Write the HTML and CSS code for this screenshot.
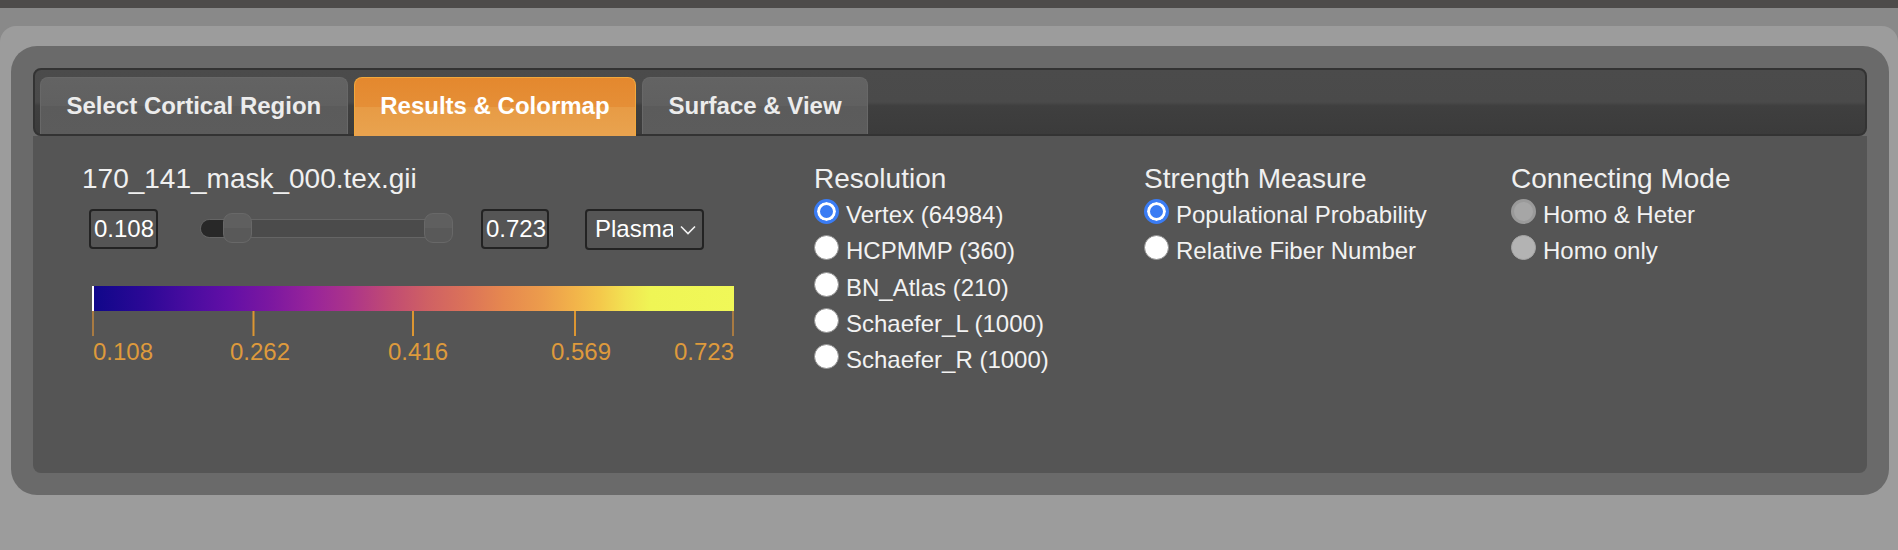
FILE: index.html
```html
<!DOCTYPE html>
<html lang="en">
<head>
<meta charset="utf-8">
<title>Results &amp; Colormap</title>
<link rel="stylesheet" href="styles.css">
</head>
<body>
<div class="topbar"></div>
<div class="frame">
  <div class="stage">
    <div class="panel">
      <div class="tabs">
        <ul class="tabbar">
          <li class="tab">Select Cortical Region</li>
          <li class="tab active">Results &amp; Colormap</li>
          <li class="tab">Surface &amp; View</li>
        </ul>
        <div class="content">
          <div class="cmap">
            <div class="fname">170_141_mask_000.tex.gii</div>
            <div class="controls">
              <div class="num num-min">0.108</div>
              <div class="slider">
                <div class="track"><div class="below"></div></div>
                <span class="handle h-min"></span>
                <span class="handle h-max"></span>
              </div>
              <div class="num num-max">0.723</div>
              <div class="select">
                <span class="sel-text">Plasma</span>
                <svg class="chev" width="16" height="10" viewBox="0 0 16 10"><path d="M1 1.5 L8 8.5 L15 1.5" fill="none" stroke="#f2f2f2" stroke-width="1.6"/></svg>
              </div>
            </div>
            <div class="bar"></div>
            <svg class="axis" width="650" height="60" viewBox="0 0 650 60">
              <rect class="tick dim" x="0" y="0" width="2" height="25"/>
              <rect class="tick" x="160.5" y="0" width="2" height="25"/>
              <rect class="tick" x="320" y="0" width="2" height="25"/>
              <rect class="tick" x="482" y="0" width="2" height="25"/>
              <rect class="tick dim" x="640" y="0" width="2" height="25"/>
              <text class="lbl" x="1" y="49">0.108</text>
              <text class="lbl" x="168" y="49" text-anchor="middle">0.262</text>
              <text class="lbl" x="326" y="49" text-anchor="middle">0.416</text>
              <text class="lbl" x="489" y="49" text-anchor="middle">0.569</text>
              <text class="lbl" x="642" y="49" text-anchor="end">0.723</text>
            </svg>
          </div>
          <div class="group g-res">
            <div class="ghead">Resolution</div>
            <label class="opt"><span class="radio on"></span>Vertex (64984)</label>
            <label class="opt"><span class="radio"></span>HCPMMP (360)</label>
            <label class="opt"><span class="radio"></span>BN_Atlas (210)</label>
            <label class="opt"><span class="radio"></span>Schaefer_L (1000)</label>
            <label class="opt"><span class="radio"></span>Schaefer_R (1000)</label>
          </div>
          <div class="group g-str">
            <div class="ghead">Strength Measure</div>
            <label class="opt"><span class="radio on"></span>Populational Probability</label>
            <label class="opt"><span class="radio"></span>Relative Fiber Number</label>
          </div>
          <div class="group g-con">
            <div class="ghead">Connecting Mode</div>
            <label class="opt"><span class="radio dis on"></span>Homo &amp; Heter</label>
            <label class="opt"><span class="radio dis"></span>Homo only</label>
          </div>
        </div>
      </div>
    </div>
  </div>
</div>
</body>
</html>
```

FILE: styles.css
```css
* { box-sizing: border-box; margin: 0; padding: 0; }
html, body { width: 1898px; height: 550px; overflow: hidden; }
body {
  background: #9c9c9c;
  font-family: "Liberation Sans", Arial, sans-serif;
  color: #f0f0f0;
}
.topbar { height: 8px; background: #4d4b4a; }
.frame { background: #898989; padding-top: 18px; }
.stage {
  background: #9c9c9c;
  border-radius: 16px 16px 0 0;
  padding: 20px 9px 55px 11px;
}
.panel {
  background: #6a6a6a;
  border-radius: 26px;
  padding: 22px;
  height: 449px;
}
.tabs { display: flex; flex-direction: column; height: 405px; }
.tabbar {
  list-style: none;
  display: flex;
  align-items: flex-start;
  height: 68px;
  border: 2px solid #333;
  border-radius: 8px;
  padding: 7px 5px 0;
  background: linear-gradient(#4b4b4b 0%, #4a4a4a 50%, #3f3f3f 56%, #3b3b3b 100%);
}
.tab {
  height: 57px;
  padding: 0 25.5px;
  margin-right: 6px;
  border: 1px solid #686868;
  border-bottom: 0;
  border-radius: 8px 8px 0 0;
  background: linear-gradient(#636363 0%, #606060 50%, #5b5b5b 50%, #5c5c5c 100%);
  font-weight: bold;
  font-size: 24px;
  line-height: 56px;
  color: #ececec;
  white-space: nowrap;
}
.tab.active {
  height: 59px;
  margin-bottom: -2px;
  border-color: #f2a83c;
  background: linear-gradient(#e4882e 0%, #e58f37 50%, #e79b45 50%, #e9a34f 100%);
  color: #ffffff;
}
.content {
  height: 337px;
  background: #555555;
  border-radius: 0 0 8px 8px;
  padding: 27px 0 0 49px;
  display: flex;
}
.cmap { width: 732px; }
.fname { font-size: 28px; line-height: 32px; color: #f0f0f0; }
.controls {
  display: flex;
  align-items: center;
  margin-top: 13px;
  height: 42px;
}
.num {
  height: 40px;
  border: 2px solid #232323;
  border-radius: 4px;
  font-size: 24px;
  line-height: 36px;
  padding-left: 3px;
  color: #ffffff;
}
.num-min { width: 69px; margin-left: 7px; }
.num-max { width: 68px; margin-left: 28px; }
.slider {
  position: relative;
  width: 253px;
  height: 30px;
  margin-left: 42px;
  margin-top: -3px;
}
.track {
  position: absolute;
  left: 0;
  top: 6px;
  width: 250px;
  height: 19px;
  border: 1px solid #656565;
  border-radius: 10px;
  background: #4b4b4b;
  overflow: hidden;
}
.below { width: 30px; height: 100%; background: #282828; }
.handle {
  position: absolute;
  top: 0;
  width: 29px;
  height: 30px;
  border: 1px solid #686868;
  border-radius: 9px;
  background: linear-gradient(#5f5f5f 0%, #5f5f5f 50%, #595959 50%, #595959 100%);
}
.h-min { left: 23px; }
.h-max { left: 224px; }
.select {
  display: flex;
  align-items: center;
  width: 119px;
  height: 41px;
  margin-left: 36px;
  border: 2px solid #232323;
  border-radius: 4px;
  padding-left: 8px;
}
.sel-text {
  width: 78px;
  overflow: hidden;
  white-space: nowrap;
  font-size: 24px;
  color: #ffffff;
}
.chev { margin-left: 7px; margin-top: 2px; }
.bar {
  margin: 36px 0 0 10px;
  width: 642px;
  height: 25px;
  border-left: 2px solid #ffffff;
  background: linear-gradient(90deg,
    #10078a 0%, #2c0896 8%, #4a0ca0 15%, #620fa6 21%, #7d18a0 28%,
    #98249a 34%, #ac348a 40%, #c04a74 46%, #cf6064 52%, #db7259 58%,
    #e6884f 64%, #ec9c4c 70%, #f2b34a 75%, #f4c84b 79%, #f2e252 83%,
    #eff555 87%, #f0f858 100%);
}
.axis { display: block; margin-left: 10px; }
.tick { fill: #dc9632; }
.tick.dim { fill: #a87a42; }
.lbl {
  font-family: "Liberation Sans", Arial, sans-serif;
  font-size: 24px;
  fill: #de9a3c;
}
.group { display: flex; flex-direction: column; }
.g-res { width: 330px; }
.g-str { width: 367px; }
.g-con { width: 340px; }
.ghead { font-size: 28px; line-height: 32px; color: #f0f0f0; margin-bottom: 2px; }
.opt {
  display: flex;
  align-items: center;
  height: 36.3px;
  font-size: 24px;
  color: #f2f2f2;
  white-space: nowrap;
}
.radio {
  width: 25px;
  height: 25px;
  border-radius: 50%;
  background: #ffffff;
  border: 1px solid #8e8e8e;
  margin: 0 7px 7px 0;
  flex: none;
}
.radio.on {
  border: 3px solid #3a7cf4;
  background: #3a7cf4;
  box-shadow: inset 0 0 0 3px #ffffff;
}
.radio.dis { background: #b3b3b3; border: 1px solid #a5a5a5; }
.radio.dis.on {
  border: 3px solid #9a9a9a;
  background: #a6a6a6;
  box-shadow: none;
}
```
